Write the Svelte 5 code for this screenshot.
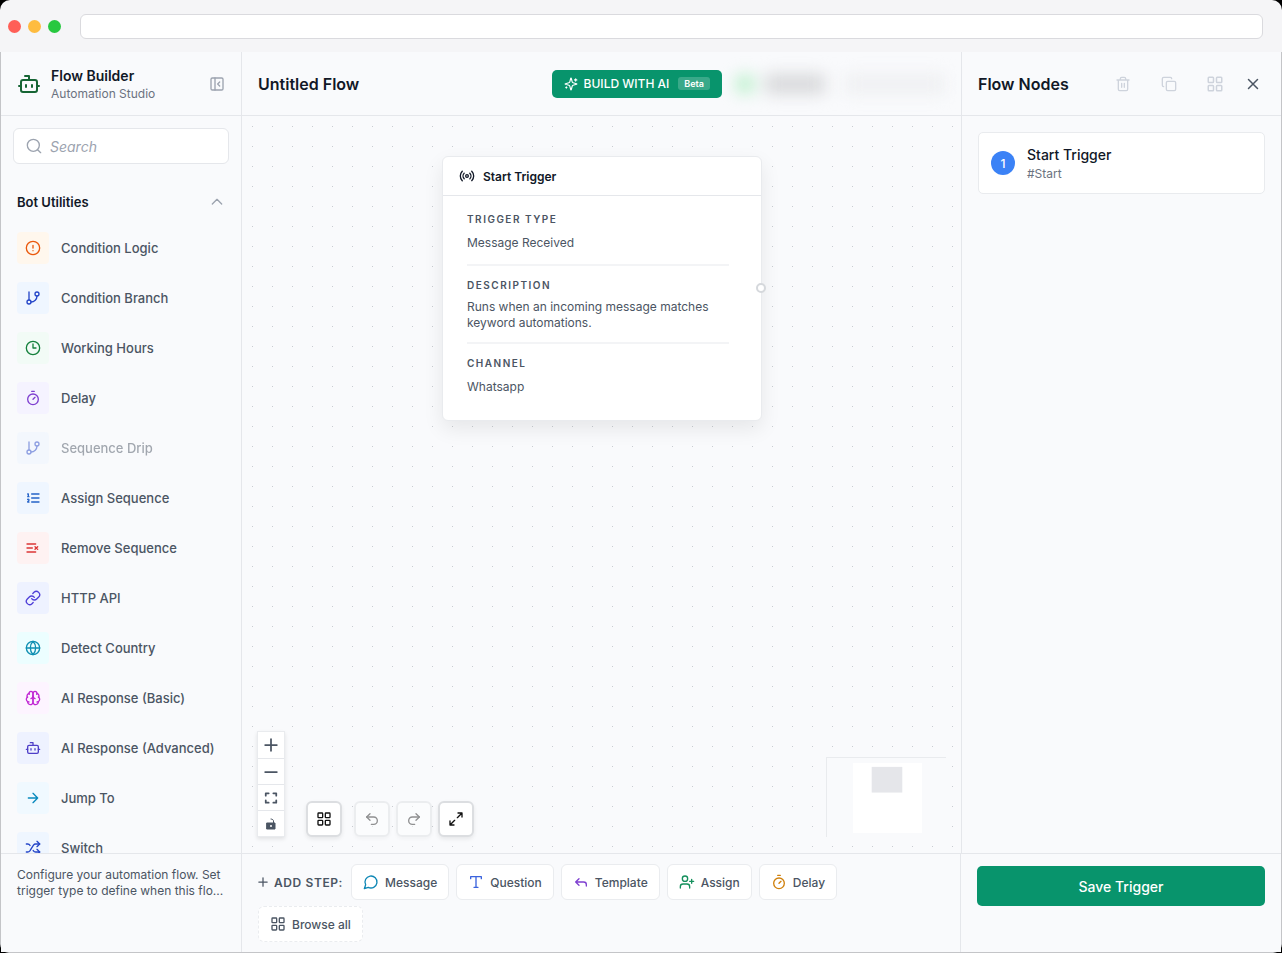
<script lang="ts">
    type Utility = {
        label: string;
        icon: string;
        color: string;
        tint: string;
        disabled?: boolean;
    };

    const icons: Record<string, string> = {
        bot: '<path d="M12 8V4H8"/><rect width="16" height="12" x="4" y="8" rx="2"/><path d="M2 14h2M20 14h2M15 13v2M9 13v2"/>',
        panel: '<rect width="18" height="18" x="3" y="3" rx="2"/><path d="M9 3v18m7-6-3-3 3-3"/>',
        search: '<circle cx="11" cy="11" r="9"/><path d="m22 22-4.500-4.500"/>',
        chevron: '<path d="m19 15-7-7-7 7"/>',
        alert: '<circle cx="12" cy="12" r="10"/><path d="M12 8v4M12 16h.01"/>',
        branch: '<path d="M6 3v12"/><circle cx="18" cy="6" r="3"/><circle cx="6" cy="18" r="3"/><path d="M18 9a9 9 0 0 1-9 9"/>',
        clock: '<circle cx="12" cy="12" r="10"/><path d="M12 6v6h4.5"/>',
        timer: '<path d="M10 2h4M12 14l3-3"/><circle cx="12" cy="14" r="8"/>',
        ordered: '<path d="M10 12h11M10 18h11M10 6h11M4 10h2M4 6h1v4M6 18H4c0-1 2-2 2-3s-1-1.5-2-1"/>',
        listx: '<path d="M11 12H3M16 6H3M16 18H3M19 10l-4 4M15 10l4 4"/>',
        link: '<path d="M10 13a5 5 0 0 0 7.54.54l3-3a5 5 0 0 0-7.07-7.07l-1.72 1.71"/><path d="M14 11a5 5 0 0 0-7.54-.54l-3 3a5 5 0 0 0 7.07 7.07l1.71-1.71"/>',
        globe: '<circle cx="12" cy="12" r="10"/><path d="M12 2a14.5 14.5 0 0 0 0 20 14.5 14.5 0 0 0 0-20M2 12h20"/>',
        brain: '<path d="M12 5a3 3 0 1 0-5.997.125 4 4 0 0 0-2.526 5.77 4 4 0 0 0 .556 6.588A4 4 0 1 0 12 18Z"/><path d="M12 5a3 3 0 1 1 5.997.125 4 4 0 0 1 2.526 5.77 4 4 0 0 1-.556 6.588A4 4 0 1 1 12 18Z"/><path d="M15 13a4.5 4.5 0 0 1-3-4 4.5 4.5 0 0 1-3 4M17.599 6.5a3 3 0 0 0 .399-1.375M6.003 5.125A3 3 0 0 0 6.401 6.5M3.477 10.896a4 4 0 0 1 .585-.396M19.938 10.5a4 4 0 0 1 .585.396M6 18a4 4 0 0 1-1.967-.516M19.967 17.484A4 4 0 0 1 18 18"/>',
        arrow: '<path d="M5 12h14M12 5l7 7-7 7"/>',
        shuffle: '<path d="m18 14 4 4-4 4M18 2l4 4-4 4"/><path d="M2 18h1.973a4 4 0 0 0 3.3-1.7l5.454-8.6a4 4 0 0 1 3.3-1.7H22M2 6h1.972a4 4 0 0 1 3.6 2.2M22 18h-6.041a4 4 0 0 1-3.3-1.8l-.359-.45"/>',
        sparkles: '<path d="M9.937 15.5A2 2 0 0 0 8.5 14.063l-6.135-1.582a.5.5 0 0 1 0-.962L8.5 9.936A2 2 0 0 0 9.937 8.5l1.582-6.135a.5.5 0 0 1 .963 0L14.063 8.5A2 2 0 0 0 15.5 9.937l6.135 1.581a.5.5 0 0 1 0 .964L15.5 14.063a2 2 0 0 0-1.437 1.437l-1.582 6.135a.5.5 0 0 1-.963 0z"/><path d="M20 3v4M22 5h-4M4 17v2M5 18H3"/>',
        trash: '<path d="M3 6h18M19 6v14a2 2 0 0 1-2 2H7a2 2 0 0 1-2-2V6M8 6V4a2 2 0 0 1 2-2h4a2 2 0 0 1 2 2v2M10 11v6M14 11v6"/>',
        copy: '<rect width="14" height="14" x="8" y="8" rx="2"/><path d="M4 16c-1.1 0-2-.9-2-2V4c0-1.1.9-2 2-2h10c1.1 0 2 .9 2 2"/>',
        grid: '<rect width="7" height="7" x="3" y="3" rx="1"/><rect width="7" height="7" x="14" y="3" rx="1"/><rect width="7" height="7" x="14" y="14" rx="1"/><rect width="7" height="7" x="3" y="14" rx="1"/>',
        close: '<path d="M18 6 6 18M6 6l12 12"/>',
        radio: '<path d="M4.9 19.1C1 15.2 1 8.8 4.9 4.9M7.8 16.2c-2.3-2.3-2.3-6.1 0-8.5M16.2 7.8c2.3 2.3 2.3 6.1 0 8.5M19.1 4.9C23 8.8 23 15.1 19.1 19"/><circle cx="12" cy="12" r="2"/>',
        plus: '<path d="M2 12h20M12 2v20"/>',
        minus: '<path d="M2 12h20"/>',
        fit: '<path d="M3 8V4h5M16 4h5v4M21 16v4h-5M8 20H3v-4"/>',
        unlock: '<path d="M4 10h16v12H4z" fill="currentColor"/><path d="M17 10V6c0-2-2-4-5-4"/><circle cx="12" cy="16" r="2" fill="#fff" stroke="none"/>',
        undo: '<path d="M9 14 4 9l5-5"/><path d="M4 9h10.500a5.500 5.500 0 0 1 0 11H11"/>',
        redo: '<path d="m15 14 5-5-5-5"/><path d="M20 9H9.500a5.500 5.500 0 0 0 0 11H13"/>',
        expand: '<path d="M15 3h6v6M9 21H3v-6M21 3l-7 7M3 21l7-7"/>',
        message: '<path d="M7.900 20A9 9 0 1 0 4 16.100L2 22Z"/>',
        type: '<path d="M12 4v16M4 7V4h16v3M9 20h6"/>',
        reply: '<path d="M20 18v-2a4 4 0 0 0-4-4H4M9 17l-5-5 5-5"/>',
        assign: '<path d="M16 21v-2a4 4 0 0 0-4-4H6a4 4 0 0 0-4 4v2M19 8v6M22 11h-6"/><circle cx="9" cy="7" r="4"/>',
    };

    const utilities: Utility[] = [
        { label: "Condition Logic", icon: "alert", color: "#ea580c", tint: "#fff7ed" },
        { label: "Condition Branch", icon: "branch", color: "#2546c8", tint: "#eff6ff" },
        { label: "Working Hours", icon: "clock", color: "#15803d", tint: "#f2fbf6" },
        { label: "Delay", icon: "timer", color: "#7e3fd0", tint: "#f5f3ff" },
        { label: "Sequence Drip", icon: "branch", color: "#2546c8", tint: "#eff6ff", disabled: true },
        { label: "Assign Sequence", icon: "ordered", color: "#2563c8", tint: "#eff6ff" },
        { label: "Remove Sequence", icon: "listx", color: "#dc3636", tint: "#fef2f2" },
        { label: "HTTP API", icon: "link", color: "#4f3fd8", tint: "#eef2ff" },
        { label: "Detect Country", icon: "globe", color: "#0e8fb2", tint: "#ecfeff" },
        { label: "AI Response (Basic)", icon: "brain", color: "#c026d3", tint: "#fdf4ff" },
        { label: "AI Response (Advanced)", icon: "bot", color: "#4f3fc8", tint: "#eef2ff" },
        { label: "Jump To", icon: "arrow", color: "#0889bd", tint: "#f0f9ff" },
        { label: "Switch", icon: "shuffle", color: "#2546c8", tint: "#eff6ff" },
    ];

    const fields = [
        { name: "Trigger Type", value: "Message Received" },
        { name: "Description", value: "Runs when an incoming message matches keyword automations.", long: true },
        { name: "Channel", value: "Whatsapp" },
    ];

    const steps = [
        { label: "Message", icon: "message", color: "#0e87b5" },
        { label: "Question", icon: "type", color: "#3b63dd" },
        { label: "Template", icon: "reply", color: "#7e3fd0" },
        { label: "Assign", icon: "assign", color: "#15905d" },
        { label: "Delay", icon: "timer", color: "#d0800c" },
    ];

    let open = $state(true);
    let query = $state("");
    const visible = $derived(
        utilities.filter((u) => u.label.toLowerCase().includes(query.toLowerCase())),
    );
</script>

{#snippet icon(name: string, size = 16, weight = 2)}
    <svg
        width={size}
        height={size}
        viewBox="0 0 24 24"
        fill="none"
        stroke="currentColor"
        stroke-width={weight}
        stroke-linecap="round"
        stroke-linejoin="round"
        aria-hidden="true">{@html icons[name]}</svg>
{/snippet}

<div class="window">
    <div class="chrome">
        <span class="light red"></span>
        <span class="light amber"></span>
        <span class="light green"></span>
        <input class="address" aria-label="Address" />
    </div>

    <div class="app">
        <header class="brand side">
            <span class="logo">{@render icon("bot", 24)}</span>
            <div class="titles">
                <strong>Flow Builder</strong>
                <span>Automation Studio</span>
            </div>
            <button class="icon-button" aria-label="Collapse sidebar">{@render icon("panel")}</button>
        </header>

        <header class="topbar">
            <h1>Untitled Flow</h1>
            <button class="ai">
                {@render icon("sparkles", 14)}
                BUILD WITH AI
                <span class="beta">Beta</span>
            </button>
            <div class="obscured" aria-hidden="true">
                <span class="blob dot"></span>
                <span class="blob dark"></span>
                <span class="blob pale"></span>
            </div>
        </header>

        <header class="nodes-head panel">
            <h2>Flow Nodes</h2>
            <div class="actions">
                <button class="icon-button" aria-label="Delete" disabled>{@render icon("trash")}</button>
                <button class="icon-button" aria-label="Duplicate" disabled>{@render icon("copy")}</button>
                <button class="icon-button" aria-label="Arrange" disabled>{@render icon("grid", 18)}</button>
            </div>
            <button class="icon-button close" aria-label="Close">{@render icon("close", 18)}</button>
        </header>

        <aside class="palette side">
            <label class="search">
                {@render icon("search")}
                <input type="search" placeholder="Search" aria-label="Search" bind:value={query} />
            </label>
            <button class="group" aria-expanded={open} onclick={() => (open = !open)}>
                Bot Utilities
                {@render icon("chevron")}
            </button>
            {#if open}
                <ul>
                    {#each visible as item}
                        <li>
                            <button class="utility" disabled={item.disabled}>
                                <span class="tile" style:color={item.color} style:background={item.tint}>
                                    {@render icon(item.icon)}
                                </span>
                                {item.label}
                            </button>
                        </li>
                    {/each}
                </ul>
            {/if}
        </aside>

        <main class="canvas">
            <article class="node">
                <h3>{@render icon("radio")} Start Trigger</h3>
                <dl>
                    {#each fields as field}
                        <div class="field" class:long={field.long}>
                            <dt>{field.name}</dt>
                            <dd>{field.value}</dd>
                        </div>
                    {/each}
                </dl>
                <span class="handle"></span>
            </article>

            <div class="overlay">
                <div class="zoom">
                    <button aria-label="Zoom in">{@render icon("plus", 14, 3)}</button>
                    <button aria-label="Zoom out">{@render icon("minus", 14, 3)}</button>
                    <button aria-label="Fit view">{@render icon("fit", 14, 3)}</button>
                    <button aria-label="Toggle lock">{@render icon("unlock", 12)}</button>
                </div>
                <div class="tools">
                    <button class="tool first" aria-label="Blocks">{@render icon("grid")}</button>
                    <button class="tool" aria-label="Undo" disabled>{@render icon("undo")}</button>
                    <button class="tool" aria-label="Redo" disabled>{@render icon("redo")}</button>
                    <button class="tool" aria-label="Full screen">{@render icon("expand")}</button>
                </div>
                <svg class="minimap" width="120" height="80" viewBox="0 0 120 80" aria-label="Minimap">
                    <rect x="26" y="5" width="70" height="71" fill="#fff" />
                    <rect x="45" y="9" width="31" height="26" fill="#e5e6ea" />
                </svg>
            </div>
        </main>

        <aside class="node-list panel">
            <button class="entry">
                <span class="badge">1</span>
                <span class="entry-text">
                    <b>Start Trigger</b>
                    <small>#Start</small>
                </span>
            </button>
        </aside>

        <footer class="hint side">
            <p>Configure your automation flow. Set trigger type to define when this flo...</p>
        </footer>

        <footer class="steps">
            <span class="add">{@render icon("plus", 10, 3)} ADD STEP:</span>
            {#each steps as step}
                <button class="step">
                    <span class="step-icon" style:color={step.color}>{@render icon(step.icon)}</span>
                    {step.label}
                </button>
            {/each}
            <button class="step browse">
                <span class="step-icon">{@render icon("grid")}</span>
                Browse all
            </button>
        </footer>

        <footer class="save">
            <button>Save Trigger</button>
        </footer>
    </div>
</div>

<style>
    :global(body) {
        background: #000;
        font-family: Inter, "Liberation Sans", sans-serif;
    }

    .window, .window * {
        box-sizing: border-box;
    }

    .window {
        height: 100vh;
        display: flex;
        flex-direction: column;
        font-size: 13px;
        color: #111827;
    }

    h1, h2, h3, p, ul, dl, dd {
        margin: 0;
        padding: 0;
    }

    button, input {
        font: inherit;
        color: inherit;
    }

    button {
        display: flex;
        align-items: center;
        padding: 0;
        border: 0;
        background: none;
        cursor: pointer;
    }

    svg {
        display: block;
        flex: none;
    }

    /* browser frame */
    .chrome {
        flex: none;
        height: 52px;
        display: flex;
        align-items: center;
        gap: 7px;
        padding: 0 19px 0 8px;
        background: #f5f5f7;
        border-radius: 10px 10px 0 0;
    }

    .light {
        width: 13px;
        height: 13px;
        border-radius: 50%;
    }

    .red { background: #ff5f57; }
    .amber { background: #febc40; }
    .green { background: #28c840; }

    .address {
        flex: 1;
        height: 25px;
        margin-left: 12px;
        padding: 0 10px;
        background: #fff;
        border: 1px solid #dadade;
        border-radius: 6px;
    }

    .app {
        flex: 1;
        min-height: 0;
        display: grid;
        grid-template-columns: 241px minmax(0, 1fr) 320px;
        grid-template-rows: 64px minmax(0, 1fr) auto;
        border: 1px solid #c4c5c8;
        border-top: 0;
        border-radius: 0 0 9px 9px;
    }

    .app > * {
        background: #f9fafc;
    }

    .side {
        border-right: 1px solid #e5e7eb;
    }

    .panel {
        border-left: 1px solid #e5e7eb;
    }

    .app > header {
        display: flex;
        align-items: center;
        padding: 0 16px;
        border-bottom: 1px solid #e5e7eb;
    }

    .app > footer {
        border-top: 1px solid #e5e7eb;
    }

    .logo {
        color: #166534;
    }

    .titles {
        flex: 1;
        display: flex;
        flex-direction: column;
        margin-left: 10px;
    }

    .titles strong {
        font-size: 14px;
        font-weight: 600;
        line-height: 20px;
    }

    .titles span {
        font-size: 12px;
        line-height: 16px;
        color: #6b7280;
    }

    .icon-button {
        justify-content: center;
        color: #9ca3af;
    }

    h1, h2 {
        font-size: 16px;
        font-weight: 600;
    }

    h1 {
        flex: 1;
    }

    .ai {
        height: 28px;
        gap: 6px;
        padding: 0 12px;
        border-radius: 5px;
        background: #08946c;
        color: #fff;
        font-size: 12px;
        font-weight: 500;
    }

    .beta {
        margin-left: 3px;
        padding: 0 6px;
        border-radius: 3px;
        background: rgb(255 255 255 / 20%);
        font-size: 9px;
        font-weight: 600;
        line-height: 13px;
    }

    .obscured {
        width: 215px;
        height: 32px;
        margin-left: 8px;
        display: flex;
        align-items: center;
        filter: blur(8px);
    }

    .blob {
        height: 20px;
    }

    .dot {
        width: 20px;
        margin-left: 5px;
        border-radius: 50%;
        background: #bbf0cb;
    }

    .dark {
        width: 60px;
        margin-left: 10px;
        background: #d8d9db;
    }

    .pale {
        flex: 1;
        margin-left: 20px;
        background: #eff0f2;
    }

    .nodes-head {
        gap: 10px;
    }

    .nodes-head h2 {
        flex: 1;
    }

    .actions {
        display: flex;
        gap: 14px;
    }

    .actions .icon-button {
        width: 32px;
        height: 32px;
        color: #ced3dc;
    }

    .close {
        width: 24px;
        height: 24px;
        color: #4b5563;
    }

    /* palette */
    .palette {
        overflow: hidden;
        padding: 12px;
    }

    .search {
        display: flex;
        align-items: center;
        gap: 8px;
        height: 36px;
        padding: 0 12px;
        background: #fff;
        border: 1px solid #e5e7eb;
        border-radius: 6px;
        color: #9ca3af;
    }

    .search input {
        width: 100%;
        min-width: 0;
        padding: 0;
        border: 0;
        outline: 0;
        background: none;
        font-size: 14px;
        color: #111827;
    }

    .search input::placeholder {
        font-style: italic;
        color: #9ca3af;
        opacity: 1;
    }

    .group {
        width: 100%;
        height: 32px;
        justify-content: space-between;
        margin: 22px 0 5px;
        padding: 0 4px;
        font-weight: 600;
    }

    .group :global(svg) {
        color: #9ca3af;
    }

    ul {
        list-style: none;
    }

    .utility {
        width: 100%;
        height: 50px;
        gap: 12px;
        padding: 0 4px;
        font-weight: 500;
        color: #4b5563;
    }

    .utility:disabled {
        opacity: 0.5;
    }

    .tile {
        width: 32px;
        height: 32px;
        display: grid;
        place-items: center;
        border-radius: 4px;
    }

    /* canvas */
    .canvas {
        position: relative;
        overflow: hidden;
        background-image: radial-gradient(circle at 0 0, #c9ccd1 1px, transparent 1px);
        background-size: 20px 20px;
        background-position: 10px 10px;
    }

    .node {
        position: absolute;
        top: 40px;
        left: 200px;
        width: 320px;
        background: #fff;
        border: 1px solid #e9ebee;
        border-radius: 6px;
        box-shadow: 0 8px 20px rgb(0 0 0 / 8%);
    }

    .node h3 {
        display: flex;
        align-items: center;
        gap: 8px;
        height: 39px;
        padding: 0 16px;
        border-bottom: 1px solid #e5e7eb;
        font-size: 12px;
        font-weight: 600;
    }

    .node dl {
        padding: 4px 32px 12px 24px;
    }

    .field {
        padding: 11px 0 13px;
        font-size: 12px;
        color: #4b5563;
    }

    .field.long {
        padding-bottom: 11px;
    }

    .field + .field {
        border-top: 2px solid #f3f4f6;
    }

    dt {
        margin-bottom: 8px;
        font-size: 10px;
        font-weight: 600;
        line-height: 16px;
        letter-spacing: 0.15em;
        text-transform: uppercase;
    }

    .long dt {
        margin-bottom: 6px;
    }

    dd {
        line-height: 16px;
    }

    .handle {
        position: absolute;
        top: 126px;
        right: -5px;
        width: 10px;
        height: 10px;
        border: 2px solid #d5d8dc;
        border-radius: 50%;
        background: #fff;
    }

    .overlay {
        position: absolute;
        inset: auto 15px 16px;
        display: flex;
        align-items: flex-end;
    }

    .zoom {
        box-shadow: 0 2px 4px rgb(0 0 0 / 10%);
        border: 1px solid #e9ebee;
        background: #fff;
    }

    .zoom button {
        width: 26px;
        height: 26px;
        justify-content: center;
        color: #4b5563;
    }

    .zoom button + button {
        border-top: 1px solid #e5e7eb;
    }

    .tools {
        flex: 1;
        display: flex;
        gap: 6px;
        margin-left: 21px;
    }

    .tool {
        width: 36px;
        height: 36px;
        justify-content: center;
        border: 2px solid #dcdee1;
        border-radius: 6px;
        background: #fff;
        color: #111;
        box-shadow: 0 2px 4px rgb(0 0 0 / 8%);
    }

    .tool:disabled {
        opacity: 0.45;
    }

    .first {
        margin-right: 6px;
    }

    .minimap {
        background: #f9fafc;
        border-top: 1px solid #e9ebee;
        border-left: 1px solid #e9ebee;
    }

    /* node list */
    .node-list {
        padding: 16px;
    }

    .entry {
        width: 100%;
        height: 62px;
        gap: 12px;
        padding: 0 12px;
        background: #fff;
        border: 1px solid #e9ebee;
        border-radius: 5px;
        text-align: left;
    }

    .badge {
        width: 24px;
        height: 24px;
        display: grid;
        place-items: center;
        border-radius: 50%;
        background: #3b82f6;
        color: #fff;
        font-size: 12px;
        font-weight: 500;
    }

    .entry-text {
        display: flex;
        flex-direction: column;
    }

    .entry b {
        font-size: 14px;
        font-weight: 500;
        line-height: 22px;
    }

    .entry small {
        font-size: 12px;
        line-height: 16px;
        color: #6b7280;
    }

    /* bottom row */
    .hint {
        padding: 13px 16px;
        font-size: 12px;
        line-height: 16px;
        color: #4b5563;
    }

    .steps {
        display: flex;
        flex-wrap: wrap;
        align-items: center;
        gap: 6px 7px;
        padding: 10px 16px;
        border-right: 1px solid #e5e7eb;
        color: #4b5563;
    }

    .add {
        display: flex;
        align-items: center;
        gap: 6px;
        margin-right: 1px;
        font-size: 12px;
        font-weight: 600;
        letter-spacing: 0.05em;
    }

    .step {
        height: 36px;
        gap: 6px;
        padding: 0 11px;
        background: #fff;
        border: 1px solid #eaecef;
        border-radius: 6px;
        font-size: 12px;
        font-weight: 500;
    }

    .browse {
        border-style: dashed;
    }

    .save {
        padding: 12px 16px;
    }

    .save button {
        width: 100%;
        height: 40px;
        justify-content: center;
        border-radius: 5px;
        background: #08946c;
        color: #fff;
        font-size: 14px;
        font-weight: 500;
    }
</style>
